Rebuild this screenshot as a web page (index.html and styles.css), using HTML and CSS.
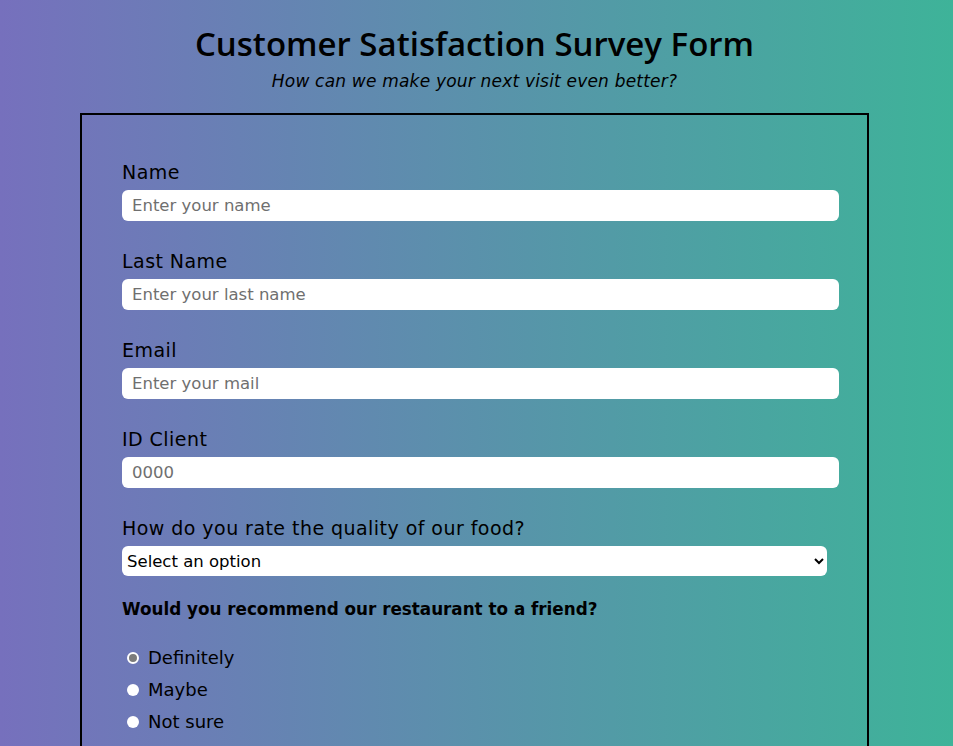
FILE: index.html
```html
<!DOCTYPE html>
<html lang="en">
<head>
<meta charset="utf-8">
<title>Customer Satisfaction Survey Form</title>
<link rel="stylesheet" href="styles.css">
</head>
<body>
<header class="head">
  <h1 class="title">Customer Satisfaction Survey Form</h1>
  <p class="subtitle">How can we make your next visit even better?</p>
</header>
<form class="survey">
  <div class="field">
    <label class="label" for="name">Name</label>
    <input class="input" id="name" type="text" placeholder="Enter your name">
  </div>
  <div class="field">
    <label class="label" for="last">Last Name</label>
    <input class="input" id="last" type="text" placeholder="Enter your last name">
  </div>
  <div class="field">
    <label class="label" for="email">Email</label>
    <input class="input" id="email" type="email" placeholder="Enter your mail">
  </div>
  <div class="field">
    <label class="label" for="idc">ID Client</label>
    <input class="input" id="idc" type="number" placeholder="0000">
  </div>
  <div class="field field-select">
    <label class="label" for="rate">How do you rate the quality of our food?</label>
    <select class="select" id="rate">
      <option>Select an option</option>
      <option>Excellent</option>
      <option>Good</option>
      <option>Poor</option>
    </select>
  </div>
  <p class="question">Would you recommend our restaurant to a friend?</p>
  <div class="radios">
    <label class="radio"><span class="dot dot-checked"></span>Definitely</label>
    <label class="radio"><span class="dot"></span>Maybe</label>
    <label class="radio"><span class="dot"></span>Not sure</label>
  </div>
</form>
</body>
</html>
```
FILE: styles.css
```css
* { box-sizing: border-box; }
html { height: 100%; }
body {
  margin: 0;
  min-height: 100%;
  background: linear-gradient(to right, #7670bd, #3eb399);
  font-family: "DejaVu Sans", "Open Sans", sans-serif;
  color: #000;
  padding: 24px 4px 0 0;
}
.head { text-align: center; }
.title {
  margin: 0;
  font-family: "Open Sans", sans-serif;
  font-size: 33px;
  font-weight: 600;
  line-height: 40px;
}
.subtitle {
  margin: 4px 0 0;
  font-style: italic;
  font-size: 17px;
  letter-spacing: 0.2px;
  line-height: 26px;
}
.survey {
  width: 789px;
  margin: 19px auto 0;
  border: 2px solid #000;
  padding: 44px 28px 40px 40px;
}
.field {
  display: flex;
  flex-direction: column;
  margin-bottom: 27px;
}
.label {
  font-size: 19px;
  letter-spacing: 0.45px;
  line-height: 26px;
  margin-bottom: 5px;
}
.input {
  width: 100%;
  height: 31px;
  border: none;
  border-radius: 6px;
  background: #fff;
  padding: 0 10px;
  font-family: inherit;
  font-size: 16.5px;
  color: #000;
}
.input::placeholder { color: #6f6f6f; }
.select {
  width: 705px;
  height: 30px;
  border: none;
  border-radius: 6px;
  background: #fff;
  font-family: inherit;
  font-size: 16.5px;
  padding: 0 1px;
  color: #000;
}
.field-select { margin-bottom: 20px; }
.question {
  margin: 0 0 23px;
  font-size: 16.8px;
  font-weight: 700;
  line-height: 26px;
}
.radios { display: flex; flex-direction: column; gap: 6px; padding-left: 5px; }
.radio {
  display: flex;
  align-items: center;
  gap: 9px;
  font-size: 18px;
  line-height: 26px;
}
.dot {
  width: 12px;
  height: 12px;
  border-radius: 50%;
  background: #fff;
  flex: none;
}
.dot-checked { background: #7b7b7b; border: 2px solid #fff; }
```
